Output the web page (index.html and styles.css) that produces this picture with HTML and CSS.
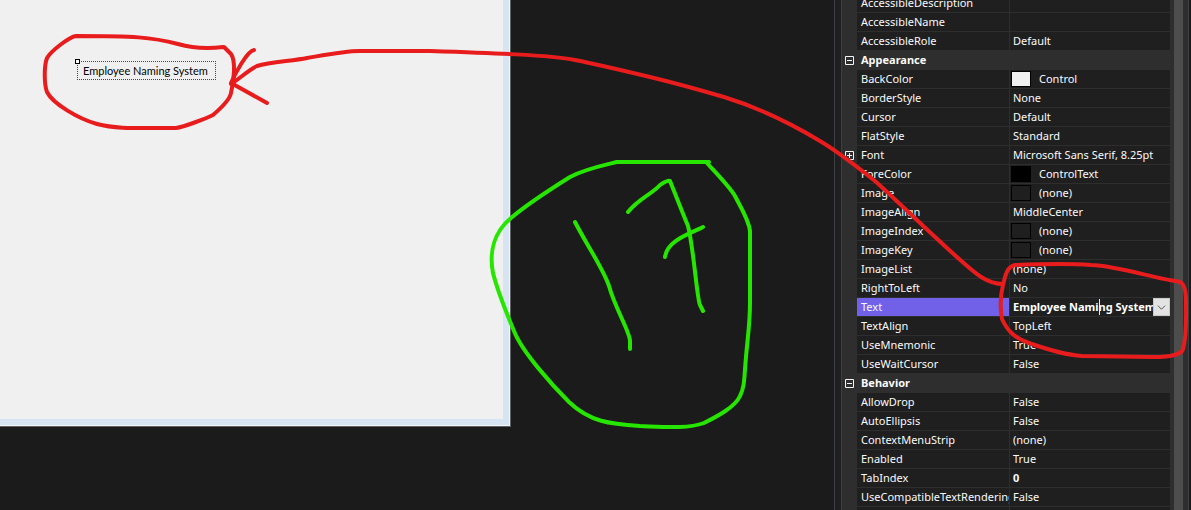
FILE: index.html
```html
<!DOCTYPE html>
<html lang="en">
<head>
<meta charset="utf-8">
<title>Form designer</title>
<link rel="stylesheet" href="styles.css">
</head>
<body>
<div class="ide">
  <main class="designer">
    <section class="form-window">
      <div class="form-surface">
        <div class="form-label">Employee Naming System<span class="grip"></span></div>
      </div>
    </section>
  </main>
  <div class="splitter"></div>
  <aside class="properties">
    <div class="grid-view">
      <table class="grid">
        <colgroup><col class="col-gutter"><col class="col-name"><col class="col-value"></colgroup>
        <tbody>
          <tr><td></td><th>AccessibleDescription</th><td></td></tr>
          <tr><td></td><th>AccessibleName</th><td></td></tr>
          <tr><td></td><th>AccessibleRole</th><td>Default</td></tr>
          <tr class="category"><td><button class="toggle" aria-label="Collapse Appearance"><svg viewBox="0 0 9 9"><path d="M.5.5h8v8h-8zM2 4.5h5"/></svg></button></td><th colspan="2">Appearance</th></tr>
          <tr><td></td><th>BackColor</th><td><span class="pick"><i class="swatch control"></i>Control</span></td></tr>
          <tr><td></td><th>BorderStyle</th><td>None</td></tr>
          <tr><td></td><th>Cursor</th><td>Default</td></tr>
          <tr><td></td><th>FlatStyle</th><td>Standard</td></tr>
          <tr><td><button class="toggle" aria-label="Expand Font"><svg viewBox="0 0 9 9"><path d="M.5.5h8v8h-8zM2 4.5h5M4.5 2v5"/></svg></button></td><th>Font</th><td>Microsoft Sans Serif, 8.25pt</td></tr>
          <tr><td></td><th>ForeColor</th><td><span class="pick"><i class="swatch black"></i>ControlText</span></td></tr>
          <tr><td></td><th>Image</th><td><span class="pick"><i class="swatch"></i>(none)</span></td></tr>
          <tr><td></td><th>ImageAlign</th><td>MiddleCenter</td></tr>
          <tr><td></td><th>ImageIndex</th><td><span class="pick"><i class="swatch"></i>(none)</span></td></tr>
          <tr><td></td><th>ImageKey</th><td><span class="pick"><i class="swatch"></i>(none)</span></td></tr>
          <tr><td></td><th>ImageList</th><td>(none)</td></tr>
          <tr><td></td><th>RightToLeft</th><td>No</td></tr>
          <tr class="selected"><td></td><th><label for="text-value">Text</label></th><td><div class="editor"><input id="text-value" type="text" value="Employee Naming System"><span class="caret"></span><button class="drop" aria-label="Open editor"><svg viewBox="0 0 16 18"><path d="M4 7.5l4 4 4-4"/></svg></button></div></td></tr>
          <tr><td></td><th>TextAlign</th><td>TopLeft</td></tr>
          <tr><td></td><th>UseMnemonic</th><td>True</td></tr>
          <tr><td></td><th>UseWaitCursor</th><td>False</td></tr>
          <tr class="category"><td><button class="toggle" aria-label="Collapse Behavior"><svg viewBox="0 0 9 9"><path d="M.5.5h8v8h-8zM2 4.5h5"/></svg></button></td><th colspan="2">Behavior</th></tr>
          <tr><td></td><th>AllowDrop</th><td>False</td></tr>
          <tr><td></td><th>AutoEllipsis</th><td>False</td></tr>
          <tr><td></td><th>ContextMenuStrip</th><td>(none)</td></tr>
          <tr><td></td><th>Enabled</th><td>True</td></tr>
          <tr><td></td><th>TabIndex</th><td><b>0</b></td></tr>
          <tr><td></td><th>UseCompatibleTextRendering</th><td>False</td></tr>
          <tr><td></td><th></th><td></td></tr>
        </tbody>
      </table>
    </div>
    <div class="scroll-thumb"></div>
  </aside>
  <div class="edge"></div>
  <svg class="ink" viewBox="0 0 1191 510" preserveAspectRatio="xMinYMin meet" aria-hidden="true">
    <g class="red">
      <path d="M223 47C207 49 192 48 178 44C151 37 134 36 76 36C69 37 51 51 47 58C44 66 44 84 47 92C53 104 79 119 97 124C116 129 134 128 176 128C184 127 207 118 213 115C220 109 230 99 231 93C234 80 236 61 231 54L224 47"/>
      <path d="M254 50C247 51 235 74 231 83L267 103M231 84C239 79 250 69 257 66C270 62 292 61 307 58C330 54 345 51 360 51L430 51C490 53 550 55 575 60C600 65 625 71 650 77C675 83 700 90 724 97C760 108 795 126 820 141C840 153 855 165 875 181C892 196 930 233 958 258C972 270 985 284 1003 284"/>
      <path d="M1176 281C1155 279 1120 266 1091 265C1065 263 1040 264 1015 265C1006 267 1005 278 1003 285C1000 297 1000 308 1002 319C1007 330 1014 338 1029 343C1046 349 1067 355 1082 356L1153 357C1171 357 1182 354 1183 349C1187 335 1186 319 1186 302C1186 289 1184 280 1174 281"/>
    </g>
    <g class="green">
      <path d="M709 162L617 162C605 165 585 169 570 177C554 187 525 206 511 218C494 232 489 252 493 273C498 293 505 309 514 331C522 352 553 386 569 402C590 422 610 424 640 426C665 427 688 429 704 423C718 416 735 407 740 396C745 386 744 378 746 357C748 334 750 323 750 302L750 231C749 220 740 206 735 196C729 186 715 172 706 162"/>
      <path d="M575 222C585 242 603 268 609 286C615 308 630 332 630 341V349M628 212C639 198 651 195 660 185C664 182 669 180 670 181C674 191 685 219 688 226C694 250 697 300 700 305L703 311M665 257C667 240 692 233 703 227"/>
    </g>
  </svg>
</div>
</body>
</html>
```
FILE: styles.css
```css
* { box-sizing: border-box; }

body {
  margin: 0;
  background: #1b1b1b;
  color: #fafafa;
  font: 11px/18px "Noto Sans", "Open Sans", sans-serif;
}

button { margin: 0; padding: 0; border: 0; background: none; }
svg { display: block; }

.ide {
  position: relative;
  display: flex;
  height: 100vh;
  overflow: hidden;
}

.designer { flex: 1; min-width: 0; }

.form-window {
  width: 511px;
  height: 427px;
  background: #d7e4f2;
  border: solid #606264;
  border-width: 0 1px 1px 0;
  padding: 0 7px 7px 0;
  box-shadow: inset -1px -1px #f2f6fa;
}

.form-surface {
  height: 100%;
  padding: 61px 77px;
  background: #f0f0f0;
}

.form-label {
  position: relative;
  width: max-content;
  padding: 0 7px 0 5px;
  border: 1px dotted #444;
  color: #000;
  font: 11px/17px Lato, "Liberation Sans", sans-serif;
}

.grip {
  position: absolute;
  top: -3px;
  left: -3px;
  width: 5px;
  height: 5px;
  border: 1px solid #000;
  background: #fff;
}

.splitter {
  width: 8px;
  border: solid #3f3f46;
  border-width: 0 1px;
  background: #1f1f1f;
}

.properties {
  display: flex;
  gap: 4px;
  width: 346px;
  padding-right: 5px;
  background: #2e2e2e;
}

.grid-view { flex: 1; overflow: hidden; }

.grid {
  width: 100%;
  margin-top: -6px;
  table-layout: fixed;
  border-collapse: separate;
  border-spacing: 0;
}

.col-gutter { width: 15px; }
.col-name { width: 153px; }

.grid th,
.grid td {
  height: 19px;
  padding: 0 0 0 4px;
  border-bottom: 1px solid #2e2e2e;
  background: #1f1f1f;
  font-weight: 400;
  text-align: left;
  white-space: nowrap;
  overflow: hidden;
}

.grid th { border-right: 1px solid #2e2e2e; }
.grid td:last-child { padding-left: 3px; }

.grid td:first-child,
.grid .category th { background: #2e2e2e; }

.grid td:first-child { padding: 0 0 0 3px; }
.grid .category th,
.grid b { font-weight: 700; }
.grid .selected th { background: #7160e8; }
.grid .selected td:last-child { padding: 0; }

.toggle,
.toggle svg {
  display: block;
  width: 9px;
  height: 9px;
}

.toggle path { fill: none; stroke: #f4f4f4; }

.pick {
  display: flex;
  align-items: center;
  gap: 8px;
  margin-left: -2px;
}

.swatch {
  width: 20px;
  height: 16px;
  border: 1px solid #000;
}

.swatch.control { background: #f0f0f0; }
.swatch.black { background: #000; }

.editor { position: relative; display: flex; height: 18px; }

.editor input {
  flex: 1;
  min-width: 0;
  padding: 0 0 0 3px;
  border: 0;
  outline: 0;
  background: transparent;
  color: #fff;
  font: inherit;
  font-weight: 700;
}

.caret {
  position: absolute;
  top: 1px;
  left: 89px;
  width: 1px;
  height: 16px;
  background: #e8e8e8;
}

.drop { width: 17px; background: #e3e3e3; border: 1px solid #c8c8c8; }
.drop svg { width: 100%; height: 100%; }
.drop path { fill: none; stroke: #444; stroke-width: 1; }

.scroll-thumb { width: 9px; background: #4d4d4d; }

.edge {
  width: 3px;
  border-left: 1px solid #3f3f46;
  background: #1b1b1b;
}

.ink {
  position: absolute;
  inset: 0;
  width: 100%;
  height: 100%;
  pointer-events: none;
}

.ink path {
  fill: none;
  stroke-width: 4;
  stroke-linecap: round;
  stroke-linejoin: round;
}

.red { stroke: #e81c1c; }
.green { stroke: #26e600; }
```
